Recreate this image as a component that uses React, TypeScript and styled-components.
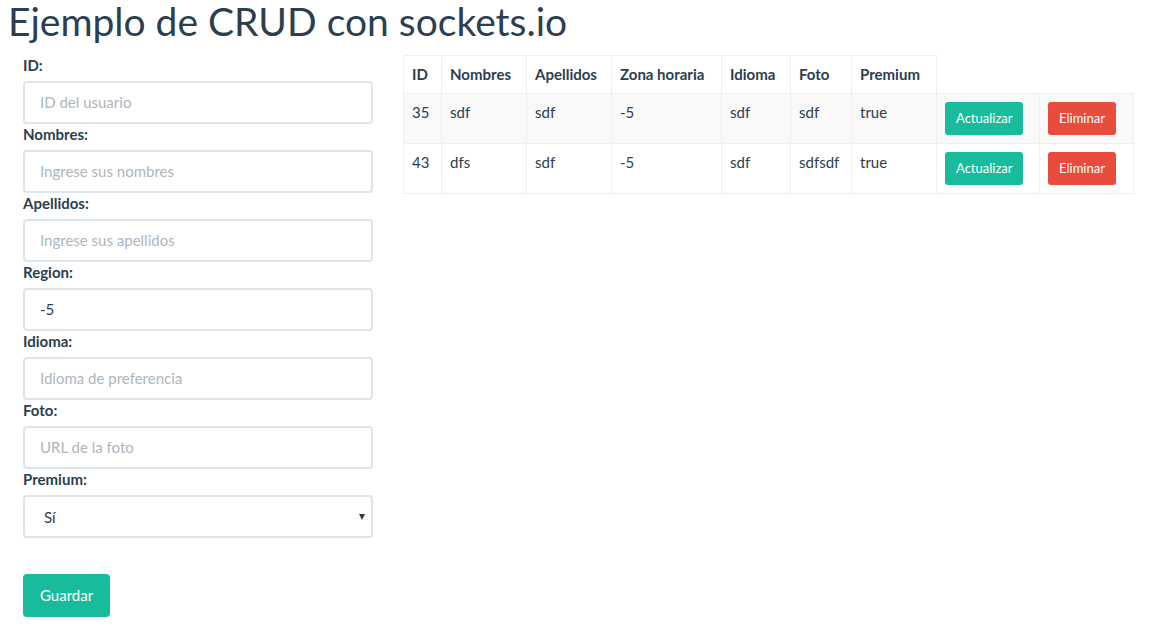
import React from "react";
import styled, { createGlobalStyle } from "styled-components";

const Global = createGlobalStyle`
  html, body { margin: 0; padding: 0; background: #fff; }
  body { font-family: Lato, "Open Sans", sans-serif; color: #2c3e50; font-size: 15px; line-height: 1.42857; }
  * { box-sizing: border-box; }
`;

const Page = styled.div`
  padding: 0 8px;
`;

const Title = styled.h1`
  margin: 0 0 12px 0;
  font-size: 39px;
  font-weight: 400;
  line-height: 43px;
  color: #2c3e50;
`;

const Main = styled.div`
  display: flex;
  align-items: flex-start;
  gap: 30px;
  padding-left: 15px;
`;

const Form = styled.form`
  width: 350px;
  display: flex;
  flex-direction: column;
`;

const Group = styled.div`
  display: flex;
  flex-direction: column;
`;

const Label = styled.label`
  font-weight: 700;
  font-size: 15px;
  line-height: 21px;
  margin-bottom: 5px;
`;

const Input = styled.input`
  height: 43px;
  width: 100%;
  padding: 9px 15px 11px;
  border: 2px solid #dce4ec;
  border-radius: 4px;
  font-family: Lato, sans-serif;
  font-size: 15px;
  color: #2c3e50;
  outline: none;
  &::placeholder { color: #acb6c0; opacity: 1; }
`;

const SelectWrap = styled.div`
  position: relative;
  &::after {
    content: "";
    position: absolute;
    right: 8px;
    top: 19px;
    border-left: 3.5px solid transparent;
    border-right: 3.5px solid transparent;
    border-top: 6px solid #2c3e50;
    pointer-events: none;
  }
`;

const Select = styled.select`
  appearance: none;
  height: 43px;
  width: 100%;
  padding: 10px 15px 10px 19px;
  border: 2px solid #dce4ec;
  border-radius: 4px;
  background: #fff;
  font-family: Lato, sans-serif;
  font-size: 15px;
  color: #2c3e50;
  outline: none;
`;

const Button = styled.button<{ $variant: "success" | "danger"; $small?: boolean }>`
  border: none;
  border-radius: ${(p) => (p.$small ? "3px" : "4px")};
  background: ${(p) => (p.$variant === "success" ? "#18bc9c" : "#e74c3c")};
  color: #fff;
  font-family: Lato, sans-serif;
  font-size: ${(p) => (p.$small ? "13px" : "15px")};
  line-height: ${(p) => (p.$small ? "19px" : "21px")};
  height: ${(p) => (p.$small ? "33px" : "43px")};
  padding: ${(p) => (p.$small ? "0 11px" : "0 17px")};
  cursor: pointer;
`;

const SaveButton = styled(Button)`
  align-self: flex-start;
  margin-top: 36px;
`;

const Table = styled.table`
  width: 730px;
  table-layout: fixed;
  border-collapse: collapse;
  font-size: 15px;
  line-height: 21px;
`;

const Col = styled.col<{ $w: number }>`
  width: ${(p) => p.$w}px;
`;

const Th = styled.th`
  text-align: left;
  font-weight: 700;
  padding: 8px;
  border: 1px solid #ecf0f1;
  white-space: nowrap;
`;

const Row = styled.tr`
  &:nth-child(odd) { background: #f9f9f9; }
`;

const Td = styled.td`
  padding: 8px;
  height: 50px;
  vertical-align: top;
  border: 1px solid #ecf0f1;
`;

const users = [
  { id: 35, nombres: "sdf", apellidos: "sdf", zona: "-5", idioma: "sdf", foto: "sdf", premium: "true" },
  { id: 43, nombres: "dfs", apellidos: "sdf", zona: "-5", idioma: "sdf", foto: "sdfsdf", premium: "true" },
];

const fields = [
  { label: "ID:", placeholder: "ID del usuario" },
  { label: "Nombres:", placeholder: "Ingrese sus nombres" },
  { label: "Apellidos:", placeholder: "Ingrese sus apellidos" },
  { label: "Region:", placeholder: "", value: "-5" },
  { label: "Idioma:", placeholder: "Idioma de preferencia" },
  { label: "Foto:", placeholder: "URL de la foto" },
];

const widths = [38, 85, 85, 110, 69, 61, 85, 103, 94];

export default function App() {
  return (
    <Page>
      <Global />
      <Title>Ejemplo de CRUD con sockets.io</Title>
      <Main>
        <Form onSubmit={(e) => e.preventDefault()}>
          {fields.map((f) => (
            <Group key={f.label}>
              <Label>{f.label}</Label>
              <Input placeholder={f.placeholder} defaultValue={f.value} />
            </Group>
          ))}
          <Group>
            <Label>Premium:</Label>
            <SelectWrap>
              <Select defaultValue="si">
                <option value="si">Sí</option>
                <option value="no">No</option>
              </Select>
            </SelectWrap>
          </Group>
          <SaveButton $variant="success" type="submit">Guardar</SaveButton>
        </Form>
        <Table>
          <colgroup>
            {widths.map((w, i) => (
              <Col key={i} $w={w} />
            ))}
          </colgroup>
          <thead>
            <tr>
              <Th>ID</Th>
              <Th>Nombres</Th>
              <Th>Apellidos</Th>
              <Th>Zona horaria</Th>
              <Th>Idioma</Th>
              <Th>Foto</Th>
              <Th>Premium</Th>
            </tr>
          </thead>
          <tbody>
            {users.map((u) => (
              <Row key={u.id}>
                <Td>{u.id}</Td>
                <Td>{u.nombres}</Td>
                <Td>{u.apellidos}</Td>
                <Td>{u.zona}</Td>
                <Td>{u.idioma}</Td>
                <Td>{u.foto}</Td>
                <Td>{u.premium}</Td>
                <Td><Button $variant="success" $small>Actualizar</Button></Td>
                <Td><Button $variant="danger" $small>Eliminar</Button></Td>
              </Row>
            ))}
          </tbody>
        </Table>
      </Main>
    </Page>
  );
}
